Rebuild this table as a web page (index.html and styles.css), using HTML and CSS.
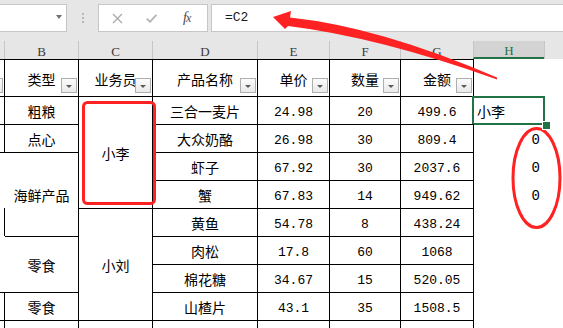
FILE: index.html
```html
<!DOCTYPE html>
<html lang="zh-CN">
<head>
<meta charset="utf-8">
<title>Sheet</title>
<link rel="stylesheet" href="styles.css">
</head>
<body>
<div class="app">
  <div class="toolbar">
    <div class="namebox"><span class="nb-arrow"></span></div>
    <div class="grip"><i></i><i></i><i></i></div>
    <div class="fxbox">
      <svg class="ic-x" width="11" height="11" viewBox="0 0 11 11"><path d="M1 1 L10 10 M10 1 L1 10" stroke="#a9a9a9" stroke-width="1.3" fill="none"/></svg>
      <svg class="ic-ok" width="11" height="9" viewBox="0 0 11 9"><path d="M0.8 4.6 L4 7.8 L10.4 0.8" stroke="#b3b3b3" stroke-width="1.8" fill="none"/></svg>
      <span class="ic-fx"><i>f</i><i class="sub">x</i></span>
    </div>
    <div class="formula">=C2</div>
  </div>

  <div class="sheet">
    <!-- column letters -->
    <div class="hd a"></div>
    <div class="hd b">B</div>
    <div class="hd">C</div>
    <div class="hd">D</div>
    <div class="hd">E</div>
    <div class="hd">F</div>
    <div class="hd">G</div>
    <div class="hd sel">H</div>
    <div class="hd"></div>

    <!-- row 1 -->
    <div class="ca"><span class="dd"></span></div>
    <div class="c nl">类型<span class="dd"></span></div>
    <div class="c">业务员<span class="dd"></span></div>
    <div class="c">产品名称<span class="dd"></span></div>
    <div class="c">单价<span class="dd"></span></div>
    <div class="c">数量<span class="dd"></span></div>
    <div class="c">金额<span class="dd"></span></div>
    <div class="h"></div>
    <div class="i"></div>

    <!-- row 2 -->
    <div class="ca"></div>
    <div class="c nl">粗粮</div>
    <div class="c span4">小李</div>
    <div class="c">三合一麦片</div>
    <div class="c num">24.98</div>
    <div class="c num">20</div>
    <div class="c num">499.6</div>
    <div class="h active">小李</div>
    <div class="i"></div>

    <!-- row 3 -->
    <div class="ca"></div>
    <div class="c nl">点心</div>
    <div class="c">大众奶酪</div>
    <div class="c num">26.98</div>
    <div class="c num">30</div>
    <div class="c num">809.4</div>
    <div class="h num right">0</div>
    <div class="i"></div>

    <!-- row 4 -->
    <div class="ca nr"></div>
    <div class="c nl span3">海鲜产品</div>
    <div class="c">虾子</div>
    <div class="c num">67.92</div>
    <div class="c num">30</div>
    <div class="c num">2037.6</div>
    <div class="h num right">0</div>
    <div class="i"></div>

    <!-- row 5 -->
    <div class="ca nr nt"></div>
    <div class="c">蟹</div>
    <div class="c num">67.83</div>
    <div class="c num">14</div>
    <div class="c num">949.62</div>
    <div class="h num right">0</div>
    <div class="i"></div>

    <!-- row 6 -->
    <div class="ca nt"></div>
    <div class="c span4">小刘</div>
    <div class="c">黄鱼</div>
    <div class="c num">54.78</div>
    <div class="c num">8</div>
    <div class="c num">438.24</div>
    <div class="h"></div>
    <div class="i"></div>

    <!-- row 7 -->
    <div class="ca nr nt"></div>
    <div class="c nl span2">零食</div>
    <div class="c">肉松</div>
    <div class="c num">17.8</div>
    <div class="c num">60</div>
    <div class="c num">1068</div>
    <div class="h"></div>
    <div class="i"></div>

    <!-- row 8 -->
    <div class="ca nr nt"></div>
    <div class="c">棉花糖</div>
    <div class="c num">34.67</div>
    <div class="c num">15</div>
    <div class="c num">520.05</div>
    <div class="h"></div>
    <div class="i"></div>

    <!-- row 9 -->
    <div class="ca"></div>
    <div class="c nl">零食</div>
    <div class="c">山楂片</div>
    <div class="c num">43.1</div>
    <div class="c num">35</div>
    <div class="c num">1508.5</div>
    <div class="h"></div>
    <div class="i"></div>

    <!-- row 10 -->
    <div class="ca"></div>
    <div class="c nl"></div>
    <div class="c"></div>
    <div class="c"></div>
    <div class="c"></div>
    <div class="c"></div>
    <div class="c"></div>
    <div class="h"></div>
    <div class="i"></div>
  </div>

  <svg class="annot" width="563" height="328" viewBox="0 0 563 328">
    <rect x="83.5" y="102.5" width="71" height="101" rx="4" ry="4" fill="none" stroke="#ff2222" stroke-width="3"/>
    <ellipse cx="536.5" cy="178" rx="23.5" ry="49.5" fill="none" stroke="#ff2222" stroke-width="3"/>
    <path d="M273 17 L291 11 L290 17.5 Q380 27 497 77.6 L497 79.4 Q378 37 288 26 L285 29 Z" fill="#ff2222"/>
  </svg>
</div>
</body>
</html>
```

FILE: styles.css
```css
* { box-sizing: border-box; }
html, body { margin: 0; padding: 0; }
body {
  width: 563px;
  height: 328px;
  overflow: hidden;
  background: #fff;
  font-family: "Noto Sans CJK SC", sans-serif;
  color: #000;
}
.app {
  position: relative;
  width: 563px;
  height: 328px;
  overflow: hidden;
}

/* formula bar */
.toolbar {
  height: 41px;
  background: #e6e6e6;
  display: flex;
  align-items: flex-start;
  padding-top: 4px;
}
.namebox {
  position: relative;
  width: 68px;
  height: 28px;
  margin-left: -1px;
  background: #fff;
  border: 1px solid #c6c6c6;
}
.nb-arrow {
  position: absolute;
  right: 4px;
  top: 10px;
  width: 0;
  height: 0;
  border-left: 3px solid transparent;
  border-right: 3px solid transparent;
  border-top: 4px solid #707070;
}
.grip {
  margin-left: 15px;
  margin-top: 9px;
  display: flex;
  flex-direction: column;
  gap: 2px;
}
.grip i {
  display: block;
  width: 2px;
  height: 2px;
  background: #b8b8b8;
}
.fxbox {
  margin-left: 14px;
  width: 110px;
  height: 28px;
  background: #fff;
  border: 1px solid #c6c6c6;
  display: flex;
  align-items: center;
  padding-left: 13px;
}
.ic-x { margin-right: 23px; }
.ic-ok { margin-right: 26px; margin-top: 1px; }
.ic-fx {
  font-family: "Liberation Serif", serif;
  font-size: 14px;
  color: #4a4a4a;
  line-height: 1;
  white-space: nowrap;
}
.ic-fx i { font-style: italic; }
.ic-fx .sub { font-size: 12px; margin-left: -1px; }
.formula {
  flex: 1;
  margin-left: 3px;
  margin-right: -1px;
  height: 28px;
  background: #fff;
  border: 1px solid #c6c6c6;
  padding-left: 13px;
  font-family: "Liberation Mono", monospace;
  font-size: 13px;
  line-height: 25px;
  color: #1a1a1a;
}

/* sheet grid */
.sheet {
  display: grid;
  grid-template-columns: 5px 73px 74px 105px 72px 71px 73px 71px 1fr;
  grid-template-rows: 18px 37px repeat(9, 28px);
}
.hd {
  background: #e6e6e6;
  border-left: 1px solid #c6c6c6;
  font-family: "Liberation Serif", serif;
  font-size: 13px;
  color: #3a3a3a;
  display: flex;
  align-items: center;
  justify-content: center;
  padding-top: 3px;
}
.hd.a { border-left: 0; border-right: 1px solid #c6c6c6; }
.hd.b { border-left: 0; }
.hd.sel {
  background: #d3d3d3;
  color: #217346;
  border-bottom: 2px solid #217346;
  padding-top: 4px;
}

.c {
  position: relative;
  border-top: 1px solid #000;
  border-left: 1px solid #000;
  display: flex;
  align-items: center;
  justify-content: center;
  font-size: 14px;
  white-space: nowrap;
  padding-top: 1px;
}
.c.nl { border-left: 0; }
.num {
  font-family: "Liberation Mono", monospace;
  font-size: 13px;
}
.c.num { padding-top: 4px; }
.span2 { grid-row: span 2; }
.span3 { grid-row: span 3; }
.span4 { grid-row: span 4; }

.ca {
  position: relative;
  border-top: 1px solid #000;
  border-right: 1px solid #000;
}
.ca.nr { border-right: 0; }
.ca.nt { border-top: 0; }

.h {
  position: relative;
  border-left: 1px solid #000;
  display: flex;
  align-items: center;
  font-size: 14px;
  padding-left: 3px;
  padding-top: 1px;
}
.h.right { justify-content: flex-end; padding-right: 4px; padding-top: 4px; }
.h.active::after {
  content: "";
  position: absolute;
  left: -2px;
  top: 0;
  right: -1px;
  bottom: -1px;
  border: 2px solid #217346;
}
.h.active::before {
  content: "";
  position: absolute;
  left: 68px;
  top: 25px;
  width: 7px;
  height: 7px;
  background: #217346;
  border: 1px solid #fff;
  z-index: 2;
}
.i { background: #fff; }

/* filter dropdown buttons */
.dd {
  position: absolute;
  right: 1px;
  bottom: 3px;
  width: 16px;
  height: 15px;
  border: 1px solid #aeaeae;
  background: linear-gradient(#fbfbfb, #e9e9e9);
}
.dd::after {
  content: "";
  position: absolute;
  left: 4px;
  top: 6px;
  border-left: 3px solid transparent;
  border-right: 3px solid transparent;
  border-top: 3px solid #5a5a5a;
}

/* annotation overlay */
.annot {
  position: absolute;
  left: 0;
  top: 0;
  pointer-events: none;
}
```
